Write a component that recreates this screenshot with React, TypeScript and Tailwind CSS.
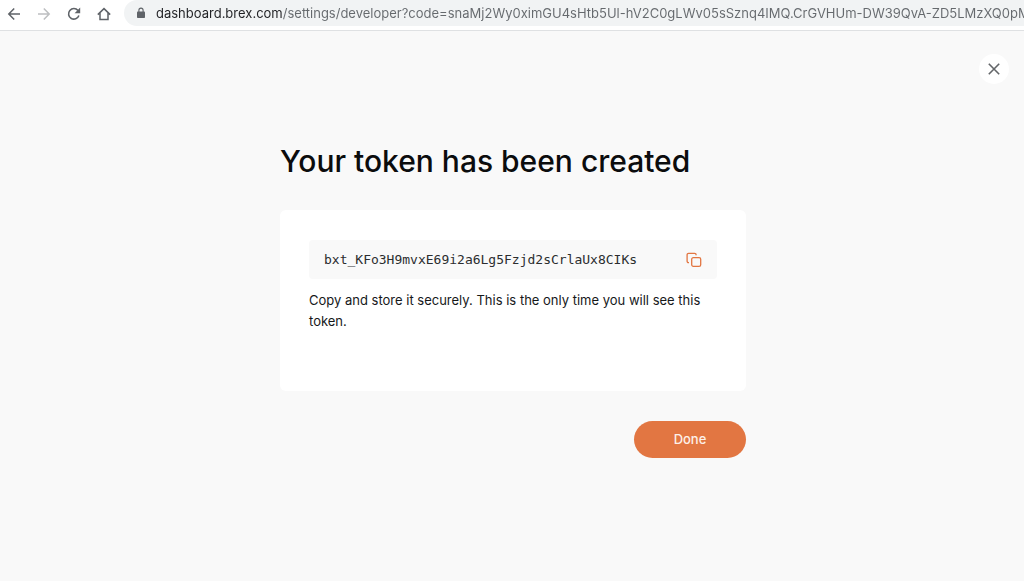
import { useState } from 'react';

const TOKEN = 'bxt_KFo3H9mvxE69i2a6Lg5Fzjd2sCrlaUx8CIKs';
const PAGE_URL =
  'dashboard.brex.com/settings/developer?code=snaMj2Wy0ximGU4sHtb5Ul-hV2C0gLWv05sSznq4IMQ.CrGVHUm-DW39QvA-ZD5LMzXQ0pM';

function BackIcon() {
  return (
    <svg width="16" height="16" viewBox="0 0 16 16" fill="none" stroke="currentColor" strokeWidth="1.5">
      <path d="M14 8H3M8.2 2.5 2.8 8l5.4 5.5" />
    </svg>
  );
}

function ForwardIcon() {
  return (
    <svg width="16" height="16" viewBox="0 0 16 16" fill="none" stroke="currentColor" strokeWidth="1.5">
      <path d="M2 8h11M7.8 2.5 13.2 8l-5.4 5.5" />
    </svg>
  );
}

function ReloadIcon() {
  return (
    <svg width="16" height="16" viewBox="0 0 16 16" fill="none" stroke="currentColor" strokeWidth="1.6">
      <path d="M12.9 9.6A5.3 5.3 0 1 1 12 4.5" />
      <path d="M14.2 1.6v5.6H8.6z" fill="currentColor" stroke="none" />
    </svg>
  );
}

function HomeIcon() {
  return (
    <svg width="16" height="16" viewBox="0 0 16 16" fill="none" stroke="currentColor" strokeWidth="1.5">
      <path d="M1.8 8.6 8 2.6l6.2 6M4 7v6.5h8V7" />
    </svg>
  );
}

function LockIcon() {
  return (
    <svg width="10" height="12" viewBox="0 0 10 12" className="shrink-0 text-[#5f6368]">
      <rect x="1" y="4.4" width="8" height="6.6" rx="0.8" fill="currentColor" />
      <path d="M2.9 5V3.2a2.1 2.1 0 0 1 4.2 0V5" fill="none" stroke="currentColor" strokeWidth="1.1" />
    </svg>
  );
}

function CopyIcon() {
  return (
    <svg width="16" height="16" viewBox="0 0 16 16" fill="none" stroke="currentColor" strokeWidth="1.3">
      <rect x="5.7" y="5.7" width="9" height="8.6" rx="1.6" />
      <path d="M3 10.6h-.5a1.4 1.4 0 0 1-1.4-1.4V2.7c0-.8.6-1.4 1.4-1.4h6.2c.8 0 1.4.6 1.4 1.4v.6" />
    </svg>
  );
}

function BrowserBar() {
  return (
    <header className="flex h-[31px] items-start gap-3 overflow-hidden border-b border-[#dfe1e3] bg-white pl-1.5">
      <nav className="flex h-7 items-center gap-3.5 text-[#5f6368]">
        <button aria-label="Back">
          <BackIcon />
        </button>
        <button aria-label="Forward" className="text-[#bdbfc1]">
          <ForwardIcon />
        </button>
        <button aria-label="Reload">
          <ReloadIcon />
        </button>
        <button aria-label="Home">
          <HomeIcon />
        </button>
      </nav>
      <div className="flex h-[26px] min-w-0 flex-1 items-center gap-2.5 rounded-l-full bg-[#f1f3f4] pl-3">
        <LockIcon />
        {/* host is darker than the rest of the address */}
        <input
          aria-label="Address"
          defaultValue={PAGE_URL}
          className="h-full min-w-0 flex-1 bg-[linear-gradient(to_right,#202124_127px,#65696d_127px)] bg-clip-text font-['Inter',sans-serif] text-[13px] text-transparent outline-none"
        />
      </div>
    </header>
  );
}

export default function App() {
  const [copied, setCopied] = useState(false);

  const copyToken = () => {
    navigator.clipboard?.writeText(TOKEN);
    setCopied(true);
  };

  return (
    <div className="flex min-h-screen flex-col bg-[#f9f9f9] font-['Inter',sans-serif] text-[#16181a]">
      <BrowserBar />
      <div className="flex justify-end px-[15px] pt-[23px]">
        <button
          aria-label="Close"
          className="flex size-[30px] items-center justify-center rounded-full bg-white text-[#636669]"
        >
          <svg width="12" height="12" viewBox="0 0 12 12" stroke="currentColor" strokeWidth="1.6">
            <path d="m.8.8 10.4 10.4M11.2.8.8 11.2" />
          </svg>
        </button>
      </div>
      <div className="pt-[57px] pl-0.5">
        <main className="mx-auto flex w-full max-w-[466px] flex-col">
          <h1 className="text-[30px] leading-10 font-medium text-[#0b0c0d]">Your token has been created</h1>
          <section className="mt-[29px] rounded-md bg-white px-[29px] pt-[30px] pb-[59px]">
            <div className="flex h-[39px] items-center justify-between rounded bg-[#f9f9f9] px-[15px]">
              <code className="font-['DejaVu_Sans_Mono',monospace] text-[13px] text-[#2b2d2f]">{TOKEN}</code>
              <button aria-label={copied ? 'Copied' : 'Copy token'} onClick={copyToken} className="text-[#e27642]">
                <CopyIcon />
              </button>
            </div>
            <p className="mt-[11px] text-[13px] leading-[21px]">
              Copy and store it securely. This is the only time you will see this token.
            </p>
          </section>
          <button className="mt-[30px] h-[37px] w-28 self-end rounded-full bg-[#e27642] text-[13px] font-medium text-[#fdf0e9]">
            Done
          </button>
        </main>
      </div>
    </div>
  );
}
